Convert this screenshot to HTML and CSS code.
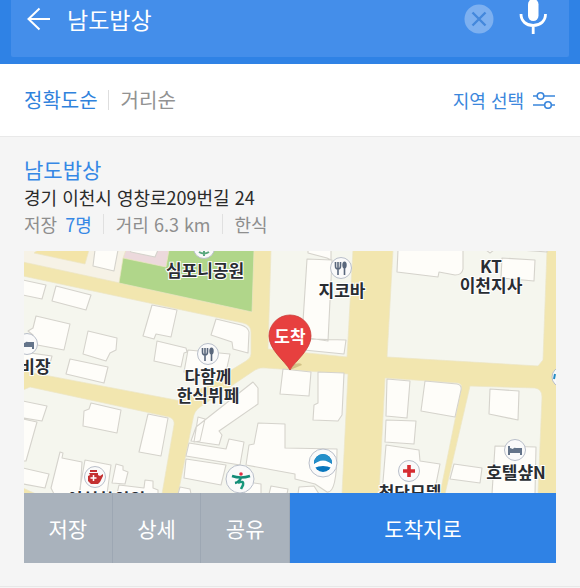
FILE: index.html
```html
<!DOCTYPE html>
<html lang="ko">
<head>
<meta charset="utf-8">
<meta name="viewport" content="width=device-width, initial-scale=1">
<title>남도밥상</title>
<link rel="stylesheet" href="styles.css">
</head>
<body>
<header class="header">
  <form class="search">
    <button class="icon-button" type="button" aria-label="뒤로">
      <svg width="24" height="24" viewBox="0 0 24 24" fill="none" stroke="#fff" stroke-width="2"><path d="M12.5 1.5 1.5 12l11 10.5M2 12h21"/></svg>
    </button>
    <input class="search-input" type="text" aria-label="검색어" value="남도밥상">
    <button class="icon-button clear" type="button" aria-label="지우기">
      <svg width="30" height="30" viewBox="0 0 30 30"><circle cx="15" cy="15" r="14.500" fill="#7db0f0"/><path d="m8.500 8.500 13 13m0-13-13 13" stroke="#4488dc" stroke-width="2.400"/></svg>
    </button>
    <button class="icon-button" type="button" aria-label="음성 검색">
      <svg width="28" height="40" viewBox="0 0 28 40"><rect x="9" y="0" width="10.500" height="22" rx="5.200" fill="#fff"/><path d="M2 15c0 7 5 11.500 12.200 11.500S26.500 22 26.500 15M14.200 26v9" fill="none" stroke="#fff" stroke-width="2.800"/></svg>
    </button>
  </form>
</header>
<nav class="filters">
  <button class="sort active" type="button">정확도순</button>
  <button class="sort" type="button">거리순</button>
  <button class="region" type="button">지역 선택
    <svg width="24" height="18" viewBox="0 0 24 18" fill="none" stroke="#3a86dc" stroke-width="1.600"><path d="M1 5h4m7 0h11M1 14h11.500m7 0H23"/><circle cx="8.500" cy="5" r="3.300"/><circle cx="16" cy="14" r="3.300"/></svg>
  </button>
</nav>
<main class="result">
  <h1 class="name"><a href="#place">남도밥상</a></h1>
  <p class="address">경기 이천시 영창로209번길 24</p>
  <ul class="meta">
    <li>저장 <b>7명</b></li>
    <li>거리 6.3 km</li>
    <li>한식</li>
  </ul>
  <svg class="map" viewBox="24 251 532 242" role="img" aria-label="지도">
    <rect x="24" y="251" width="532" height="242" fill="#f2e6af"/>
    <!-- land between the roads -->
    <g fill="#f5f6ee" stroke="#ece5c4" stroke-width=".7">
      <path fill="#f6f2e6" d="M23 250H127L120 283 23 262Z"/>
      <path fill="#f3e4a8" d="M38 250H89L85 264 34 253Z"/>
      <path fill="#ecd9dc" d="M126 250H169L166 268 123 258Z"/>
      <path fill="#b0d68a" d="M123 258 166 267 169 250H254L252 312 119 283Z"/>
      <path d="M23 276 243 323Q251 325 251 332V354Q251 358 246 361L181 401 23 371Z"/>
      <path d="M271 250H353L347 357 268 349Z"/>
      <path d="M393 250H547L543 360 538 366 387 357Z"/>
      <path d="M23 390 30 387 169 417Q175 419 174 425L162 494H36L23 488Z"/>
      <path d="M200 407 255 370Q260 367 266 368L348 374 342 494H178L193 419Q194 411 200 407Z"/>
      <path d="M385 378 458 383Q463 384 461 390L440 494H379Z"/>
      <path d="M470 386 535 388Q542 389 542 397L538 494H445Z"/>
    </g>
    <!-- buildings -->
    <g fill="#fefdf9" stroke="#d5d3cc" stroke-width="1.100" stroke-linejoin="round">
      <path d="M95 250H118L114 271 93 266ZM130 250H158L155 257 131 252Z"/>
      <path d="M23 280 46 285 42 299 23 295ZM56 286 91 295 86 310 52 301Z"/>
      <path d="M36 316 70 324 64 350 32 344 33 335 28 331 33 328ZM23 352 52 356 48 371 23 367ZM88 331 117 338 116 350 110 353 106 361 83 354ZM70 359 108 367 104 383 66 374Z"/>
      <path d="M152 305 177 310 171 337 156 334 154 339 143 336ZM157 341 186 348 187 352 184 353 181 367 154 361ZM188 350 230 354 226 372 184 372Z"/>
      <path d="M216 319 241 325Q248 327 249 332L248 353 233 349 232 342 211 335Z"/>
      <path d="M273 250V247H331V260L327 258 308 253V250ZM307 259 332 260 328 341 302 337ZM311 339 346 340 344 354 304 350Z"/>
      <path d="M398 250H463V269Q462 275 455 275L439 272 438 277 397 272ZM502 258 535 260 534 281 501 278ZM486 250 490 253 494 250ZM520 250H547V252Z"/>
      <path d="M91 403 121 410 117 433 83 426 84 411 89 409ZM148 414 168 418 161 456 139 452Z"/>
      <path d="M23 401 47 406 42 421 23 418ZM23 419 37 422 26 461H23ZM23 468 49 474 45 488 23 484Z"/>
      <path d="M60 452 63 453 62 458 82 462 80 494H54L51 488ZM85 460 111 465 107 494H79ZM116 464 123 466V470L128 472 125 484 112 483ZM119 485 144 488 145 480 153 481V488L158 490V494H117Z"/>
      <path d="M198 417 205 419 200 441 194 442ZM196 427 253 382 258 388V404L219 431 222 435 219 445 191 441Z"/>
      <path d="M189 443 226 449 229 439 244 442 240 465 186 456ZM186 459 226 465 221 485 184 478ZM180 487 190 489 191 494H178Z"/>
      <path d="M283 369 311 372 309 396 280 394ZM318 372 344 373 342 415 338 421 313 420 314 405 318 403Z"/>
      <path d="M258 423 285 424V448L337 449Q337 494 327 492L315 484 295 479V474L246 465 249 445 254 444ZM271 486 288 489 287 494H269ZM247 482 261 484V494H244ZM299 487 314 486 319 494H298Z"/>
      <path d="M387 379 410 381 407 418 386 416ZM425 381 457 384Q462 385 461 390L455 417 421 411ZM386 420 416 421 414 444 385 442ZM386 445 419 450 420 461 440 464 434 494H382ZM490 389 519 391 518 420 489 414ZM454 464 482 468 480 483 450 479ZM495 446 536 447 535 494H492Z"/>
    </g>
    <!-- markers -->
    <g fill="#fafafa" stroke="#b9bfca" stroke-width="1">
      <circle cx="204" cy="248" r="10.500"/><circle cx="341" cy="268" r="10.500"/><circle cx="208" cy="354" r="10.500"/>
      <circle cx="27" cy="344" r="10.500"/><circle cx="95" cy="477" r="10.500"/><circle cx="240" cy="479" r="14"/>
      <circle cx="323" cy="463" r="14"/><circle cx="409" cy="471" r="10.500"/><circle cx="515" cy="450" r="10.500"/><circle cx="562" cy="377" r="10"/>
    </g>
    <path d="M204 248v8M199 252q5 3 10 0" stroke="#58a77d" stroke-width="2" fill="none"/>
    <defs>
      <g id="fork"><path d="M-5.500-6v4q0 3 2.500 3t2.500-3v-4M-3-6V7M3.500 0V7" fill="none" stroke="#59677c" stroke-width="1.600"/><ellipse cx="3.500" cy="-3" rx="2.200" ry="3.500" fill="#59677c"/></g>
      <path id="bed" d="M-7-4h2v2l3 1q1-2 3-1h6v7H5V3h-10v2h-2Z" fill="#64748a"/>
    </defs>
    <use href="#fork" x="341" y="268"/><use href="#fork" x="208" y="354"/>
    <use href="#bed" x="27" y="344"/><use href="#bed" x="515" y="450"/>
    <path d="M409 465v12m-6-6h12" stroke="#d52c31" stroke-width="3.600"/>
    <path d="M89 473h9v2l2 1 3-2v2l-3 6-2 2h-7l-3-3v-5l2-1Zm1-3h7v2h-7Z" fill="#c43132"/><path d="M93.500 475v6m-3-3h6" stroke="#fff" stroke-width="1.500"/>
    <circle cx="241" cy="474" r="1.800" fill="#e12f43"/><path d="M232 476q9 3 18 0M241 477q-1 5-6 6" fill="none" stroke="#128b77" stroke-width="2.500"/><path d="M238 483q6-3 5 2l-2 4" fill="none" stroke="#16977b" stroke-width="2.500"/>
    <circle cx="323" cy="463" r="9" fill="#0876bd"/><path d="M314 463a9 9 0 0 1 18 0q-9-5-18 0Z" fill="#248fc9"/><path d="M313 465q10-9 20 0l-1 3q-9-4-18 0Z" fill="#fff"/>
    <path d="m555 374-1 5" stroke="#258bc4" stroke-width="2"/>
    <g class="labels">
      <text x="205" y="277">심포니공원</text>
      <text x="342" y="297">지코바</text>
      <text x="491" y="273">KT</text><text x="491" y="292">이천지사</text>
      <text x="35" y="373">비장</text>
      <text x="208" y="383">다함께</text><text x="208" y="402">한식뷔페</text>
      <text x="516" y="479">호텔샾N</text>
      <text x="410" y="499">첨단모델</text>
      <text x="106" y="506">이천한의원</text>
    </g>
    <!-- destination pin -->
    <path d="M290 370 302 365Q301 362 295 364Z" fill="#bda96b" opacity=".6"/>
    <path d="M290 370C285 361 269 350 269 336a21 21 0 0 1 42 0C311 350 295 361 290 370Z" fill="#e7403f" stroke="#c93c39" stroke-width=".8"/>
    <text class="pin-text" x="290" y="343">도착</text>
  </svg>
  <div class="actions">
    <button type="button">저장</button>
    <button type="button">상세</button>
    <button type="button">공유</button>
    <button class="primary" type="button">도착지로</button>
  </div>
</main>
</body>
</html>
```
FILE: styles.css
```css
* { box-sizing: border-box; }
body {
  margin: 0;
  background: #f5f5f5;
  color: #2b2b2b;
  font-family: "Noto Sans CJK KR", sans-serif;
}
button, input { font: inherit; border: 0; padding: 0; background: none; color: inherit; }
svg { display: block; }
.header { background: #2f82e5; padding: 0 11px 7px; }
.search {
  display: flex;
  align-items: center;
  height: 57px;
  padding: 0 22px 20px 16px;
  background: #448eea;
  border-radius: 0 0 2px 2px;
}
.icon-button { flex: none; }
.search-input {
  flex: 1;
  min-width: 0;
  height: 36px;
  margin-left: 16px;
  color: #fff;
  font-size: 23px;
}
.clear { margin-right: 25px; }
.filters {
  display: flex;
  align-items: center;
  height: 73px;
  padding: 0 24px;
  background: #fff;
  border-bottom: 1px solid #e9e9e9;
  font-size: 20px;
}
.sort { color: #929292; line-height: 20px; }
.sort.active { color: #2f82dc; }
.sort + .sort { margin-left: 10px; padding-left: 12px; border-left: 1px solid #dedede; }
.region {
  display: flex;
  align-items: center;
  gap: 8px;
  margin-left: auto;
  color: #3a86dc;
  font-size: 18px;
}
.result { padding: 18px 24px 23px; border-bottom: 1px solid #e8e8e8; }
.name { margin: 0; font-size: 21px; line-height: 28px; font-weight: 400; }
.name a { color: #3688e5; text-decoration: none; }
.address { margin: 0; font-size: 18px; line-height: 28px; }
.meta {
  display: flex;
  align-items: center;
  height: 26px;
  margin: 0 0 14px;
  padding: 0;
  list-style: none;
  color: #8e8e8e;
  font-size: 18px;
  line-height: 20px;
}
.meta b { margin-left: 3px; color: #3688e5; font-weight: 400; }
.meta li + li { margin-left: 11px; padding-left: 12px; border-left: 1px solid #e0e0e0; }
.map { width: 100%; height: auto; }
.labels text {
  fill: #292d32;
  stroke: #fff;
  stroke-width: 2px;
  paint-order: stroke;
  font-size: 17px;
  font-weight: 700;
  text-anchor: middle;
}
.pin-text { fill: #fff; font-size: 17px; font-weight: 700; text-anchor: middle; }
.actions {
  display: grid;
  grid-template-columns: 1fr 1fr 1fr 3fr;
  height: 70px;
  color: #fff;
  font-size: 21px;
}
.actions button { background: #a9b2bc; border-right: 1px solid #9da7b3; }
.actions .primary { background: #2f82e5; border: 0; }
```
